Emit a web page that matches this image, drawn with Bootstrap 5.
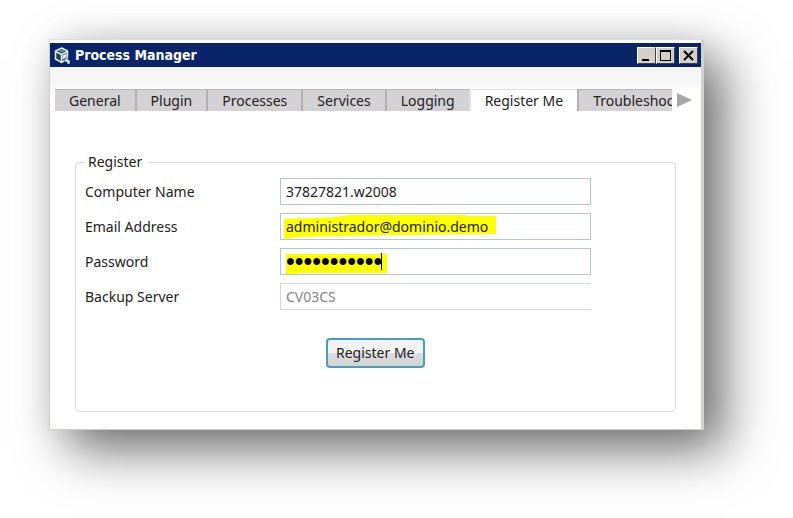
<!DOCTYPE html>
<html lang="en">
<head>
<meta charset="utf-8">
<meta name="viewport" content="width=device-width, initial-scale=1">
<title>Process Manager</title>
<link href="https://cdn.jsdelivr.net/npm/bootstrap@5.3.0/dist/css/bootstrap.min.css" rel="stylesheet">
<style>
  body { font-family: "Noto Sans", "Open Sans", sans-serif; font-size: 14px; line-height: 20px; color: #222; background: #fff; padding: 39px 89px 88px 49px; }
  .app-window { background: #fff; border: 1px solid #cfcfc8; border-right: 3px solid #d2d2cc; border-top-color: #dededa; padding-top: 3px;
    box-shadow: 20px 20px 48px rgba(0,0,0,.56), 0 0 30px rgba(0,0,0,.08); }
  .title-bar { background: #0a246a; height: 24px; padding: 0 3px 0 4px; color: #fff; }
  .title-text { font: bold 14px/20px "DejaVu Sans Condensed", "DejaVu Sans", sans-serif; }
  .win-btn { width: 19px; height: 17px; background: #d4d0c8; border: 1px solid; border-color: #fff #404040 #404040 #fff; }
  .strip { height: 22px; background: linear-gradient(#f6f6f6 18px, #fff); }
  .tab-bar { padding: 0 5px; }
  .tab-bar .nav-tabs { border: 0; min-width: 0; overflow: hidden; }
  .tab-bar .nav-link { border: 0; border-top: 1px solid #b4b4b4; border-left: 2px solid #b0b0b0; border-radius: 0; margin: 0; padding: 0 14px; height: 22px; line-height: 20px; background: #d4d2d5; color: #222; white-space: nowrap; }
  .tab-bar .nav-link:first-child { border-left: 0; }
  .tab-bar .nav-link.active { background: #fff; color: #222; }
  .scroll-btn { width: 24px; }
  .group-box { margin: 41px 25px 17px 25px; border: 1px solid #dcdcdc; border-radius: 4px; padding: 0 84px 43px 9px; }
  .group-box legend { float: none; width: auto; font-size: 14px; line-height: 20px; margin: 0 0 6px; padding: 0 6px 0 3px; }
  .form-grid { display: grid; grid-template-columns: 195px 1fr; row-gap: 8px; }
  .form-grid label { line-height: 27px; }
  .form-grid .form-control { height: 27px; padding: 0 5px; font-size: 14px; line-height: 20px; border: 1px solid #b4c3de; border-radius: 0; background: transparent; color: #222; position: relative; box-shadow: none; }
  .form-grid .form-control:disabled { border-color: #d3d6e2; border-right: 0; color: #858585; }
  .form-grid .pass-field { font-family: "Liberation Sans", sans-serif; font-size: 25px; color: #000; }
  .marker { position: absolute; left: 0; top: 0; }
  .btn-register { margin-top: 28px; margin-left: 241px; border: 2px solid #3fa3bd; border-radius: 4px; padding: 3px 8px; font-size: 14px; line-height: 20px; color: #222; background: linear-gradient(#f3f3f3 0 50%, #dedede 50%, #d2d2d2); }
</style>
</head>
<body>
<main class="app-window">
  <header class="title-bar d-flex align-items-center">
    <svg width="17" height="19" viewBox="0 0 17 19" aria-hidden="true">
      <path d="M7.500 2 13.500 5v8l-6 3.500L1.500 13V5z" fill="#1d4352" stroke="#e4efef" stroke-width="1.500"/>
      <path d="M1.500 5.500l6 3 6-3M7.500 8.500V16" fill="none" stroke="#e4efef" stroke-width="1.500"/>
      <path d="M8.500 9.500l4-2v4l-4 2z" fill="#e4efef"/>
      <path d="M4 4.800l3.500-1.600L11 4.800 7.500 6.500z" fill="#5d8f96"/>
      <path d="M11 12h3v2h2v4h-3v-2h-2z" fill="#e8e8e8" stroke="#0a246a" stroke-width=".5"/>
    </svg>
    <span class="title-text me-auto ps-1">Process Manager</span>
    <button class="win-btn p-0 d-flex" aria-label="Minimize"><svg width="17" height="15"><path d="M4 11h7v2H4z"/></svg></button>
    <button class="win-btn p-0 d-flex" aria-label="Maximize"><svg width="17" height="15"><path d="M3 2h11v11H3zM4 4v8h9V4z" fill-rule="evenodd"/></svg></button>
    <button class="win-btn p-0 d-flex ms-1" aria-label="Close"><svg width="17" height="15"><path d="M4 3l9 9M13 3l-9 9" stroke="#000" stroke-width="2"/></svg></button>
  </header>
  <div class="strip"></div>
  <nav class="tab-bar d-flex align-items-center">
    <div class="nav nav-tabs flex-nowrap flex-grow-1" role="tablist">
      <button class="nav-link" role="tab">General</button>
      <button class="nav-link" role="tab">Plugin</button>
      <button class="nav-link" role="tab">Processes</button>
      <button class="nav-link" role="tab">Services</button>
      <button class="nav-link" role="tab">Logging</button>
      <button class="nav-link active" role="tab" aria-selected="true">Register Me</button>
      <button class="nav-link" role="tab">Troubleshooting</button>
    </div>
    <button class="scroll-btn btn p-0 border-0 d-flex flex-shrink-0" aria-label="More tabs"><svg width="24" height="16"><path d="M5 1l15 7-15 7z" fill="#a8a8a8"/></svg></button>
  </nav>
  <form>
    <fieldset class="group-box">
      <legend>Register</legend>
      <div class="form-grid">
        <label for="computer">Computer Name</label>
        <input class="form-control" id="computer" type="text" value="37827821.w2008">
        <label for="email">Email Address</label>
        <div class="position-relative">
          <svg class="marker" width="220" height="27" aria-hidden="true"><path d="M4 6 56 4 70 2H186V3H216V21L120 22 60 23 18 24 4 26z" fill="#ff0"/></svg>
          <input class="form-control" id="email" type="text" value="administrador@dominio.demo">
        </div>
        <label for="pass">Password</label>
        <div class="position-relative">
          <svg class="marker" width="220" height="27" aria-hidden="true"><path d="M6 6H107V25H18V27H6z" fill="#ff0"/><path d="M101 5h1v17h-1z" fill="#000"/></svg>
          <input class="form-control pass-field" id="pass" type="password" value="registerkey">
        </div>
        <label for="server">Backup Server</label>
        <input class="form-control" id="server" type="text" value="CV03CS" disabled>
      </div>
      <button class="btn btn-register" type="button">Register Me</button>
    </fieldset>
  </form>
</main>
<script src="https://cdn.jsdelivr.net/npm/bootstrap@5.3.0/dist/js/bootstrap.bundle.min.js"></script>
</body>
</html>
